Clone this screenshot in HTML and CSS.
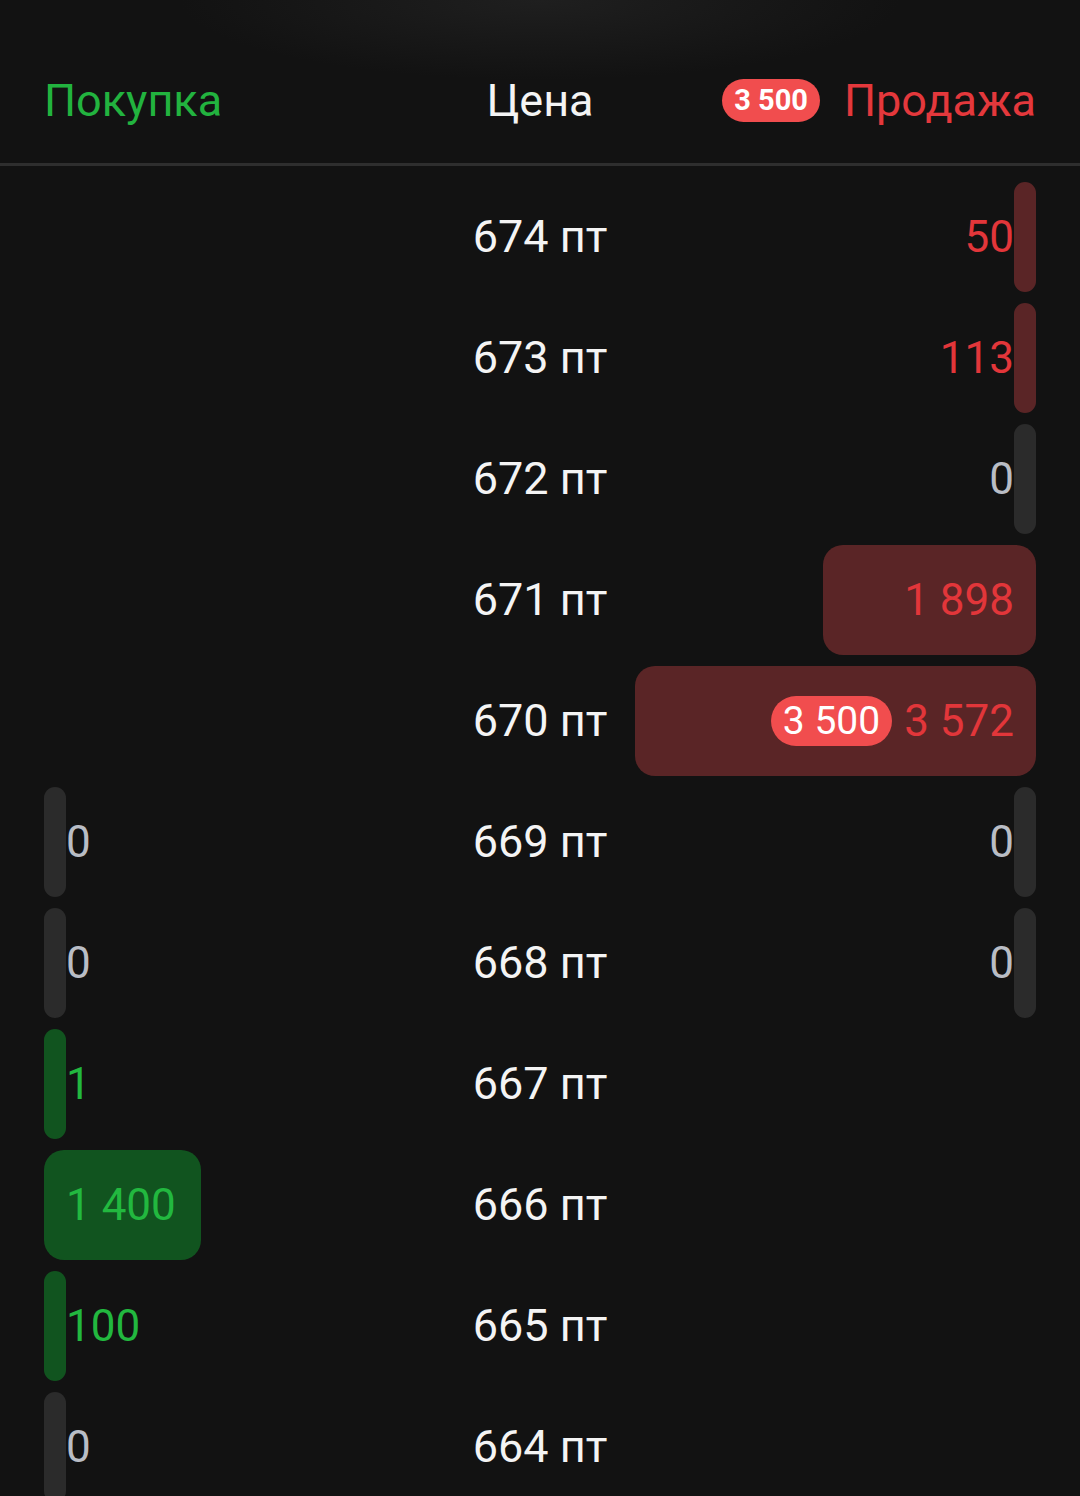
FILE: index.html
```html
<!DOCTYPE html>
<html lang="ru">
<head>
  <meta charset="UTF-8">
  <meta name="viewport" content="width=device-width, initial-scale=1.0">
  <title>Стакан</title>
  <link rel="stylesheet" href="styles.css">
</head>
<body>
  <div class="book">
    <div class="book-head">
      <div class="col-bid">Покупка</div>
      <div class="col-price">Цена</div>
      <div class="col-ask"><span class="badge badge-sm">3 500</span>Продажа</div>
    </div>

    <div class="rows">
      <div class="row">
        <div class="bid"></div>
        <div class="price">674 пт</div>
        <div class="ask"><div class="bar red" style="width:22px"><span>50</span></div></div>
      </div>
      <div class="row">
        <div class="bid"></div>
        <div class="price">673 пт</div>
        <div class="ask"><div class="bar red" style="width:22px"><span>113</span></div></div>
      </div>
      <div class="row">
        <div class="bid"></div>
        <div class="price">672 пт</div>
        <div class="ask"><div class="bar gray" style="width:22px"><span>0</span></div></div>
      </div>
      <div class="row">
        <div class="bid"></div>
        <div class="price">671 пт</div>
        <div class="ask"><div class="bar red" style="width:213px"><span>1 898</span></div></div>
      </div>
      <div class="row">
        <div class="bid"></div>
        <div class="price">670 пт</div>
        <div class="ask"><div class="bar red" style="width:401px"><span class="badge badge-lg">3 500</span><span>3 572</span></div></div>
      </div>
      <div class="row">
        <div class="bid"><div class="bar gray" style="width:22px"><span>0</span></div></div>
        <div class="price">669 пт</div>
        <div class="ask"><div class="bar gray" style="width:22px"><span>0</span></div></div>
      </div>
      <div class="row">
        <div class="bid"><div class="bar gray" style="width:22px"><span>0</span></div></div>
        <div class="price">668 пт</div>
        <div class="ask"><div class="bar gray" style="width:22px"><span>0</span></div></div>
      </div>
      <div class="row">
        <div class="bid"><div class="bar green" style="width:22px"><span>1</span></div></div>
        <div class="price">667 пт</div>
        <div class="ask"></div>
      </div>
      <div class="row">
        <div class="bid"><div class="bar green" style="width:157px"><span>1 400</span></div></div>
        <div class="price">666 пт</div>
        <div class="ask"></div>
      </div>
      <div class="row">
        <div class="bid"><div class="bar green" style="width:22px"><span>100</span></div></div>
        <div class="price">665 пт</div>
        <div class="ask"></div>
      </div>
      <div class="row">
        <div class="bid"><div class="bar gray" style="width:22px"><span>0</span></div></div>
        <div class="price">664 пт</div>
        <div class="ask"></div>
      </div>
    </div>
  </div>
</body>
</html>
```

FILE: styles.css
```css
html, body {
  margin: 0;
  padding: 0;
  height: 1496px;
  overflow: hidden;
}

body {
  font-family: 'Roboto', 'Noto Sans', sans-serif;
  background: #121212;
  background-image: radial-gradient(ellipse 360px 80px at 50% 0, #1f1f1f, rgba(18,18,18,0));
  color: #fff;
}

.book-head {
  display: grid;
  grid-template-columns: 1fr auto 1fr;
  align-items: center;
  height: 126px;
  padding: 37px 44px 0;
  border-bottom: 3px solid #2e2e2e;
  font-size: 45px;
}

.col-bid {
  color: #22b33f;
}

.col-price {
  color: #f4f4f4;
}

.col-ask {
  display: flex;
  align-items: center;
  justify-content: flex-end;
  gap: 24px;
  color: #e4383c;
}

.badge {
  display: inline-flex;
  align-items: center;
  justify-content: center;
  background: #f14d4e;
  color: #fff;
  border-radius: 24px;
}

.badge-sm {
  height: 43px;
  padding: 0 12px;
  font-size: 29px;
  font-weight: bold;
  border-radius: 22px;
}

.badge-lg {
  height: 50px;
  padding: 0 12px;
  margin-right: 12px;
  font-size: 39px;
  border-radius: 25px;
}

.rows {
  padding: 10px 44px 0;
}

.row {
  display: grid;
  grid-template-columns: 1fr auto 1fr;
  align-items: center;
  height: 121px;
}

.price {
  font-size: 45px;
  color: #f4f4f4;
  text-align: center;
}

.bid, .ask {
  display: flex;
  align-items: center;
}

.ask {
  justify-content: flex-end;
}

.bar {
  flex: none;
  display: flex;
  align-items: center;
  box-sizing: border-box;
  height: 110px;
  border-radius: 20px;
  font-size: 44px;
  white-space: nowrap;
}

.ask .bar {
  justify-content: flex-end;
  padding-right: 22px;
}

.bid .bar {
  justify-content: flex-start;
  padding-left: 22px;
}

.bar span {
  flex: none;
}

.red {
  background: #5a2526;
  color: #e2363a;
}

.green {
  background: #11541f;
  color: #22b83f;
}

.gray {
  background: #2b2b2b;
  color: #b9bdc5;
}
```
